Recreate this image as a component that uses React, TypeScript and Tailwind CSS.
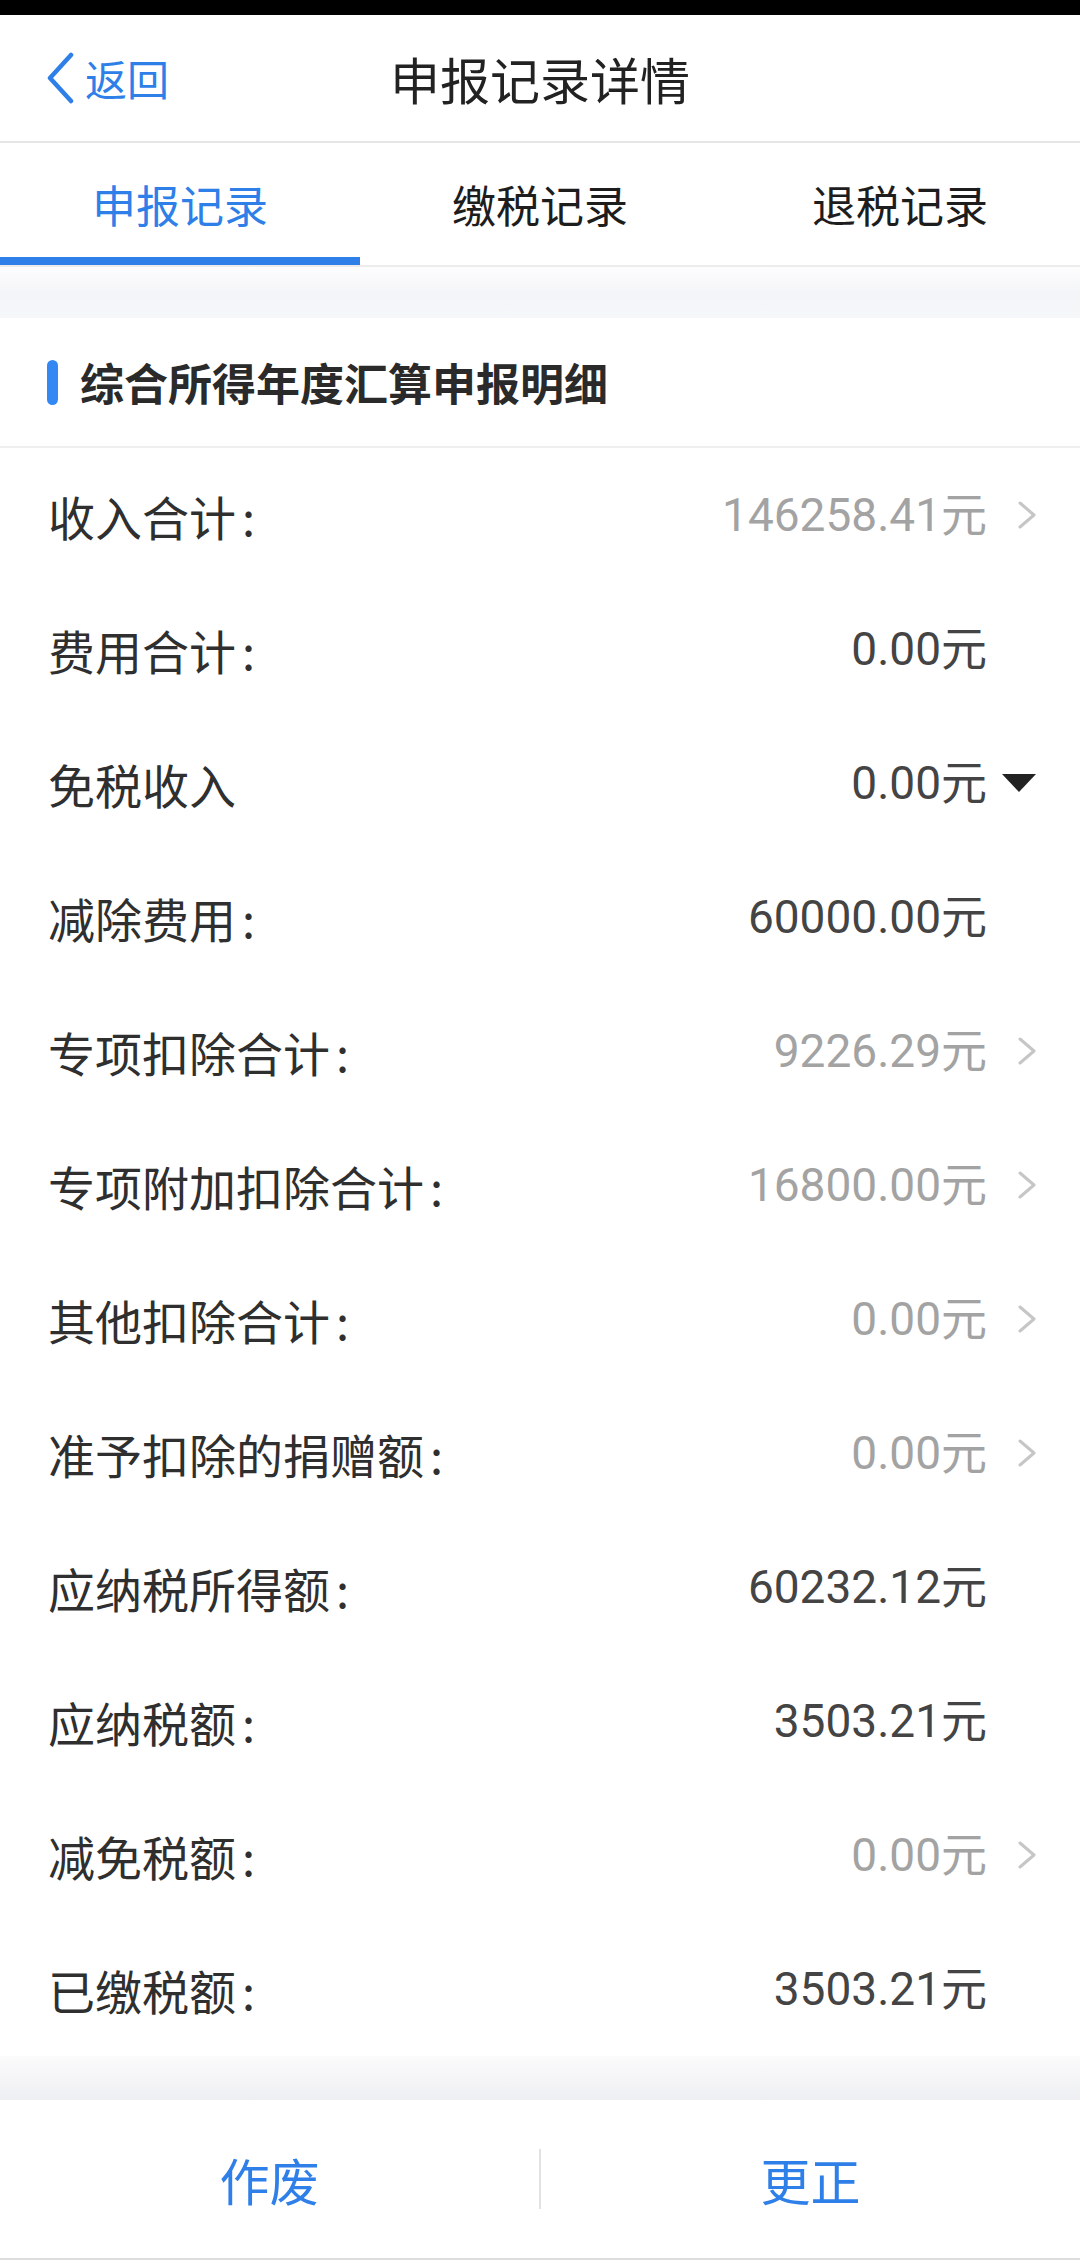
import React from "react";

type Row = { label: string; value: string; kind: "link" | "plain" | "drop" };

const rows: Row[] = [
  { label: "收入合计:", value: "146258.41元", kind: "link" },
  { label: "费用合计:", value: "0.00元", kind: "plain" },
  { label: "免税收入", value: "0.00元", kind: "drop" },
  { label: "减除费用:", value: "60000.00元", kind: "plain" },
  { label: "专项扣除合计:", value: "9226.29元", kind: "link" },
  { label: "专项附加扣除合计:", value: "16800.00元", kind: "link" },
  { label: "其他扣除合计:", value: "0.00元", kind: "link" },
  { label: "准予扣除的捐赠额:", value: "0.00元", kind: "link" },
  { label: "应纳税所得额:", value: "60232.12元", kind: "plain" },
  { label: "应纳税额:", value: "3503.21元", kind: "plain" },
  { label: "减免税额:", value: "0.00元", kind: "link" },
  { label: "已缴税额:", value: "3503.21元", kind: "plain" },
];

function Chevron() {
  return (
    <svg width="20" height="28" viewBox="0 0 20 28" fill="none">
      <path d="M3 2 L17 14 L3 26" stroke="#c6c6c6" strokeWidth="3" strokeLinecap="round" strokeLinejoin="round" />
    </svg>
  );
}

function Triangle() {
  return (
    <svg width="36" height="22" viewBox="0 0 36 22">
      <path d="M1 2 L35 2 L18 20 Z" fill="#222" />
    </svg>
  );
}

function Label({ text }: { text: string }) {
  const hasColon = text.endsWith(":");
  const body = hasColon ? text.slice(0, -1) : text;
  return (
    <div className="flex-1 text-[47px] text-[#2f2f2f] leading-none">
      {body}
      {hasColon && <span className="ml-[6px]">:</span>}
    </div>
  );
}

export default function App() {
  return (
    <div className="w-[1080px] h-[2260px] flex flex-col bg-white overflow-hidden font-['Noto_Sans_CJK_SC','Noto_Sans',sans-serif]">
      <div className="h-[15px] bg-black shrink-0" />
      {/* Header */}
      <div className="h-[128px] shrink-0 grid grid-cols-[1fr_auto_1fr] items-center border-b-2 border-[#e6e6e6]">
        <div className="flex items-center pl-[45px] gap-[10px] text-[#2e7fe8]">
          <svg width="30" height="52" viewBox="0 0 30 52" fill="none">
            <path d="M26 3 L5 26 L26 49" stroke="#2e7fe8" strokeWidth="4.5" strokeLinecap="round" strokeLinejoin="round" />
          </svg>
          <span className="text-[42px] leading-none">返回</span>
        </div>
        <div className="text-[50px] leading-none text-[#222]">申报记录详情</div>
        <div />
      </div>
      {/* Tabs */}
      <div className="h-[124px] shrink-0 grid grid-cols-3 border-b-2 border-[#ececec]">
        <div className="relative flex items-center justify-center text-[44px] text-[#2e7fe8]">
          申报记录
          <div className="absolute left-0 right-0 bottom-0 h-[8px] bg-[#2e7fe8]" />
        </div>
        <div className="flex items-center justify-center text-[44px] text-[#1d1d1d]">缴税记录</div>
        <div className="flex items-center justify-center text-[44px] text-[#1d1d1d]">退税记录</div>
      </div>
      {/* Gray band */}
      <div className="h-[51px] shrink-0 bg-gradient-to-b from-[#fdfdfe] via-[#f4f5f8] to-[#f6f7f9]" />
      {/* Section header */}
      <div className="h-[130px] shrink-0 flex items-center border-b-2 border-[#efefef] pl-[47px] gap-[22px]">
        <div className="w-[11px] h-[45px] rounded-full bg-[#3388f4]" />
        <div className="text-[44px] font-bold text-[#2a2a2a] leading-none">综合所得年度汇算申报明细</div>
      </div>
      {/* Rows */}
      <div className="flex flex-col">
        {rows.map((r) => (
          <div key={r.label} className="h-[134px] flex items-center pl-[48px] pr-[43px]">
            <Label text={r.label} />
            <div
              className={
                "text-[46px] leading-none font-['Roboto','Noto_Sans_CJK_SC',sans-serif] " +
                (r.kind === "link" ? "text-[#a3a3a3]" : "text-[#444]")
              }
            >
              {r.value}
            </div>
            <div className="w-[50px] flex items-center justify-end">
              {r.kind === "link" ? <Chevron /> : r.kind === "drop" ? <Triangle /> : null}
            </div>
          </div>
        ))}
      </div>
      {/* Bottom gray band */}
      <div className="h-[44px] shrink-0 bg-gradient-to-b from-[#fbfbfc] to-[#eeeff2]" />
      {/* Footer */}
      <div className="h-[160px] shrink-0 flex items-center border-b-2 border-[#dddddd]">
        <div className="flex-1 flex items-center justify-center text-[50px] text-[#2e7fe8]">作废</div>
        <div className="w-[2px] h-[60px] bg-[#e2e2e2]" />
        <div className="flex-1 flex items-center justify-center text-[50px] text-[#2e7fe8]">更正</div>
      </div>
    </div>
  );
}
